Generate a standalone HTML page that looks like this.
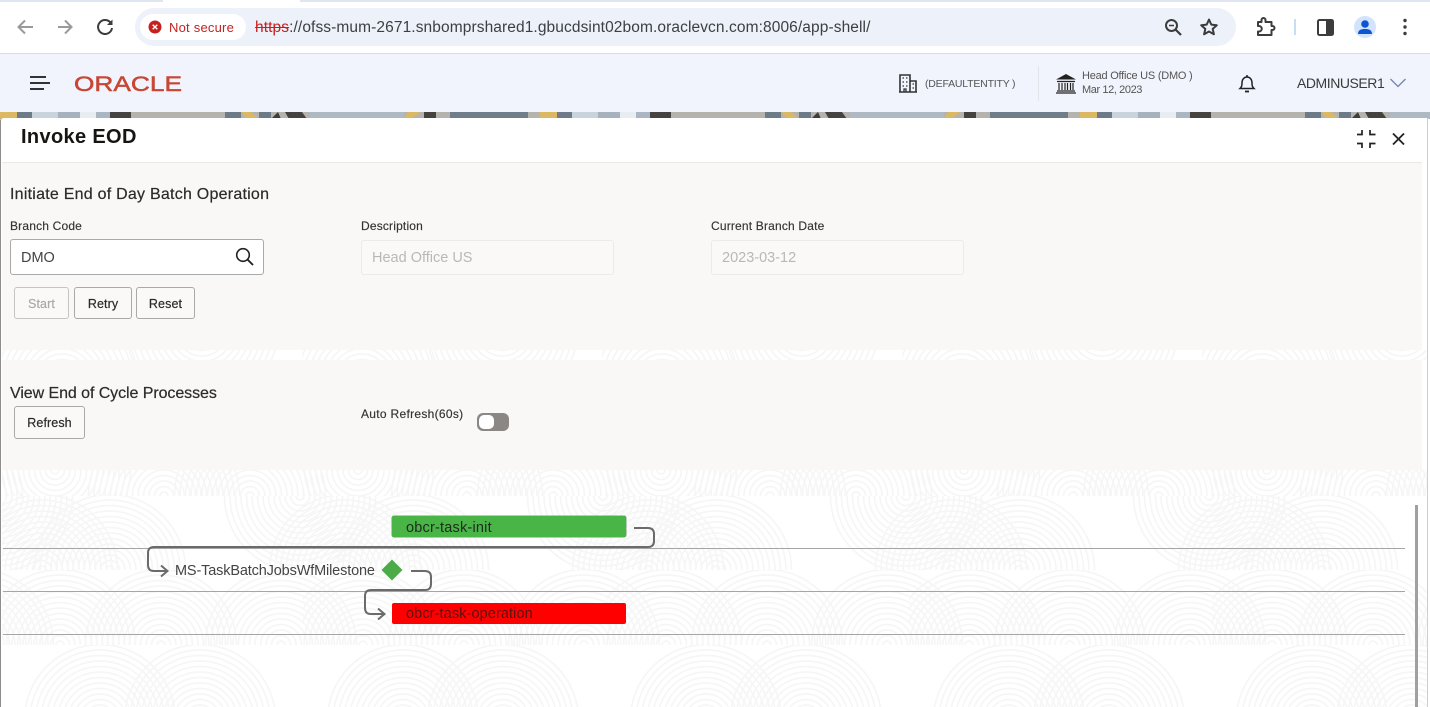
<!DOCTYPE html>
<html lang="en">
<head>
<meta charset="utf-8">
<title>Invoke EOD</title>
<style>
html,body{margin:0;padding:0;width:1430px;height:707px;overflow:hidden;background:#fff;font-family:"Liberation Sans",sans-serif}
#p{position:relative;width:1430px;height:707px;overflow:hidden;background:#fff;filter:blur(.35px)}
.a{position:absolute}
.t{position:absolute;white-space:nowrap;line-height:20px;height:20px}
svg{position:absolute;overflow:visible}
.btn{position:absolute;box-sizing:border-box;border:1.5px solid #a9a9a9;border-radius:3px;background:#faf9f7;text-align:center;font-size:12.5px;color:#2b2b2b;letter-spacing:.1px;-webkit-text-stroke:.2px currentColor}
.lab{font-size:12px;color:#333;letter-spacing:.18px;-webkit-text-stroke:.15px currentColor}
.h2{font-size:16px;color:#2b2b2b;-webkit-text-stroke:.2px currentColor}
.inp{position:absolute;box-sizing:border-box;height:35px;width:253px;top:240px;border-radius:3px;background:#faf9f7;border:1px solid #ecebe8}
</style>
</head>
<body>
<div id="p">
<!-- chrome -->
<div class="a" style="left:0;top:0;width:1430px;height:2px;background:#dfe5f1"></div>
<div class="a" style="left:163px;top:0;width:137px;height:2px;background:#fff"></div>
<div class="a" style="left:0;top:53px;width:1430px;height:1px;background:#dcdcdc"></div>
<svg style="left:0;top:0" width="130" height="54" fill="none">
<path d="M33 27H19M25 20.500 18.500 27 25 33.500" stroke="#9a9a9a" stroke-width="2"/>
<path d="M58 27H72M65 20.500 71.500 27 65 33.500" stroke="#9a9a9a" stroke-width="2"/>
<path d="M110.800 23A7 7 0 1 0 112 28" stroke="#3c3c3c" stroke-width="2"/>
<path d="M112.500 19.500V25H107Z" fill="#3c3c3c"/>
</svg>
<div class="a" style="left:135px;top:8px;width:1101px;height:38px;border-radius:19px;background:#edf1f9"></div>
<div class="a" style="left:140px;top:14px;width:106px;height:26px;border-radius:13px;background:#fff"></div>
<svg style="left:148px;top:20px" width="14" height="14"><circle cx="7" cy="7" r="6.500" fill="#c5221f"/><path d="M4.700 4.700 9.300 9.300M9.300 4.700 4.700 9.300" stroke="#fff" stroke-width="1.400"/></svg>
<div class="t" style="left:169px;top:18px;font-size:13px;color:#c5221f;letter-spacing:.22px">Not secure</div>
<div class="t" style="left:255px;top:18px;font-size:15.500px;color:#3c4043;letter-spacing:.1px"><span style="color:#c5221f;text-decoration:line-through">https</span>://ofss-mum-2671.snbomprshared1.gbucdsint02bom.oraclevcn.com:8006/app-shell/</div>
<svg style="left:1160px;top:14px" width="260" height="28" fill="none">
<circle cx="11.500" cy="11.500" r="5.500" stroke="#3c3c3c" stroke-width="2"/><path d="M15.500 15.500 21 21" stroke="#3c3c3c" stroke-width="2.200"/><path d="M9 11.500h5" stroke="#3c3c3c" stroke-width="1.500"/>
<path d="M49 5.500l2.300 5.100 5.500.6-4.100 3.700 1.200 5.400-4.900-2.800-4.900 2.800 1.200-5.400-4.100-3.700 5.500-.6z" stroke="#3c3c3c" stroke-width="2" stroke-linejoin="round"/>
<path d="M98 8h3.500V6a2 2 0 0 1 4 0V8h6v4h1a2 2 0 0 1 0 4h-1v5H98v-3.500h1a2.700 2.700 0 0 0 0-5.500h-1z" stroke="#3c3c3c" stroke-width="2" stroke-linejoin="round"/>
<path d="M135 5V21" stroke="#c8dcf5" stroke-width="2"/>
<rect x="158" y="6" width="15" height="15" rx="1.500" stroke="#3c3c3c" stroke-width="2"/><rect x="166" y="6" width="7" height="15" fill="#3c3c3c"/>
<circle cx="205" cy="13" r="11" fill="#d3e3fd"/><circle cx="205" cy="10" r="3.800" fill="#0b57d0"/><path d="M198 20c0-4 3-5 7-5s7 1 7 5z" fill="#0b57d0"/>
<circle cx="245" cy="6.500" r="1.700" fill="#3c3c3c"/><circle cx="245" cy="13" r="1.700" fill="#3c3c3c"/><circle cx="245" cy="19.500" r="1.700" fill="#3c3c3c"/>
</svg>

<!-- app header -->
<div class="a" style="left:0;top:54px;width:1430px;height:58px;background:#f1f4fc"></div>
<svg style="left:0;top:54px" width="60" height="58"><path d="M30 23H46M30 29H50M30 35H44" stroke="#333" stroke-width="2"/></svg>
<svg style="left:70px;top:70px" width="120" height="28"><text x="4" y="21" font-family="Liberation Sans,sans-serif" font-size="21" fill="#c74634" stroke="#c74634" stroke-width=".5" textLength="108" lengthAdjust="spacingAndGlyphs">ORACLE</text></svg>
<svg style="left:899px;top:74px" width="20" height="20" fill="none" stroke="#333" stroke-width="1.600"><path d="M1 18V1h10v17M11 7h6v11M0 18h18"/><path d="M3.500 4h1.500M7 4h1.500M3.500 8h1.500M7 8h1.500M3.500 12h1.500M7 12h1.500M5 18v-3h2v3M13.500 10h1.500M13.500 14h1.500" stroke-width="1.300"/></svg>
<div class="t" style="left:925px;top:74px;font-size:10.500px;color:#555;letter-spacing:-.2px">(DEFAULTENTITY )</div>
<div class="a" style="left:1038px;top:66px;width:1px;height:35px;background:#e2e4ea"></div>
<svg style="left:1056px;top:74px" width="20" height="20" fill="none" stroke="#222"><path d="M10 0 20 5.500H0Z" fill="#222" stroke="none"/><path d="M1 7.500h18M1 17h18M0 19h20" stroke-width="1.300"/><path d="M3 9v7M6 9v7M9 9v7M11.500 9v7M14.500 9v7M17 9v7" stroke-width="1.200"/></svg>
<div class="t" style="left:1082px;top:66px;font-size:11px;color:#555;letter-spacing:-.23px">Head Office US (DMO )</div>
<div class="t" style="left:1082px;top:80px;font-size:11px;color:#555;letter-spacing:-.4px">Mar 12, 2023</div>
<svg style="left:1238px;top:74px" width="18" height="20" fill="none" stroke="#222" stroke-width="1.500"><path d="M2 14.500c1.500-1.500 2-2.500 2-5.500 0-3.500 2-6 5-6s5 2.500 5 6c0 3 .5 4 2 5.500z"/><path d="M7 17.500h4" stroke-width="1.800"/><path d="M9 1v2"/></svg>
<div class="t" style="left:1297px;top:73px;font-size:14px;color:#3a3a3a;letter-spacing:-.45px">ADMINUSER1</div>
<svg style="left:1390px;top:78px" width="16" height="10" fill="none"><path d="M.5 1 8 8.500 15.500 1" stroke="#6d86ae" stroke-width="1.300"/></svg>

<!-- decorative strip -->
<svg style="left:0;top:112px" width="1430" height="7">
<defs><pattern id="s" width="540" height="7" patternUnits="userSpaceOnUse">
<rect width="540" height="7" fill="#b4b3ae"/>
<rect x="0" width="17" height="7" fill="#dcb862"/><rect x="17" width="15" height="7" fill="#6d7b88"/><rect x="32" width="26" height="7" fill="#c9d3dc"/><rect x="58" width="22" height="7" fill="#a6b3bf"/><rect x="80" width="16" height="7" fill="#e8edf2"/><rect x="96" width="14" height="7" fill="#aab6c1"/><rect x="110" width="21" height="7" fill="#45423f"/>
<rect x="225" width="16" height="7" fill="#6d7b88"/><path d="M241 0h10l8 7h-12z" fill="#dcb862"/><rect x="259" width="12" height="7" fill="#6d7b88"/><path d="M271 7l7-7 3 7z" fill="#3f3d3b"/><path d="M285 0h17l5 7h-18z" fill="#45423f"/>
<rect x="310" width="94" height="7" fill="#aeb9c4"/><path d="M404 7l4-7h12l-9 7z" fill="#dcb862"/><rect x="424" width="12" height="7" fill="#45423f"/>
<rect x="450" width="78" height="7" fill="#6f7c89"/><rect x="528" width="12" height="7" fill="#b4b3ae"/>
</pattern></defs>
<rect width="1430" height="7" fill="url(#s)"/>
</svg>

<!-- modal -->
<div class="a" style="left:0;top:118px;width:1428px;height:589px;background:#fff;border-left:1.500px solid #8d8d8d;border-right:1px solid #cfcfcf;box-sizing:border-box;border-top-left-radius:3px"></div>
<div class="t" style="left:21px;top:127px;font-size:20px;font-weight:700;color:#161513;letter-spacing:.35px">Invoke EOD</div>
<svg style="left:1355px;top:128px" width="52" height="22" fill="none" stroke="#222" stroke-width="1.700"><path d="M2 6.500H7V2M15 2V6.500H20.500M2 15.500H7V20M15 20V15.500H20.500"/><path d="M38 5.500 49 16.500M49 5.500 38 16.500" stroke-width="1.800"/></svg>

<!-- pattern -->
<svg style="left:2px;top:0" width="1425" height="707">
<defs>
<g id="c" fill="none" stroke="#f6f6f6" stroke-width="1.700">
<circle r="4"/><circle r="9.500"/><circle r="15"/><circle r="20.500"/><circle r="26"/><circle r="31.500"/><circle r="37"/><circle r="42.500"/><circle r="48"/><circle r="53.500"/><circle r="59"/><circle r="64.500"/><circle r="70"/><circle r="75.500"/>
</g>
<pattern id="r1" x="-2" y="470" width="303" height="26" patternUnits="userSpaceOnUse">
<use href="#c" x="164" y="26"/><use href="#c" x="55" y="0"/><use href="#c" x="250" y="26"/><use href="#c" x="-53" y="26"/>
</pattern>
<pattern id="r2" x="-2" y="496" width="303" height="74" patternUnits="userSpaceOnUse">
<use href="#c" x="110" y="74"/><use href="#c" x="42" y="74"/><use href="#c" x="345" y="74"/><use href="#c" x="300" y="0"/><use href="#c" x="-3" y="0"/>
</pattern>
<pattern id="r3" x="-2" y="570" width="303" height="75" patternUnits="userSpaceOnUse">
<use href="#c" x="161" y="75"/><use href="#c" x="281" y="75"/><use href="#c" x="-22" y="75"/><use href="#c" x="60" y="75"/>
</pattern>
<pattern id="r4" x="-2" y="645" width="303" height="62" patternUnits="userSpaceOnUse">
<use href="#c" x="100" y="75"/><use href="#c" x="200" y="75"/>
</pattern>
<pattern id="r0" x="0" y="350" width="300" height="10" patternUnits="userSpaceOnUse">
<use href="#c" x="60" y="30"/><use href="#c" x="200" y="-20"/>
</pattern>
</defs>
<rect x="0" y="350" width="1425" height="10" fill="url(#r0)"/>
<rect x="0" y="470" width="1425" height="26" fill="url(#r1)"/>
<rect x="0" y="496" width="1425" height="74" fill="url(#r2)"/>
<rect x="0" y="570" width="1425" height="75" fill="url(#r3)"/>
<rect x="0" y="645" width="1425" height="62" fill="url(#r4)"/>
</svg>

<!-- sections -->
<div class="a" style="left:2px;top:162px;width:1420px;height:1px;background:#e9e8e5"></div>
<div class="a" style="left:2px;top:163px;width:1420px;height:187px;background:#f9f8f6"></div>
<div class="a" style="left:2px;top:360px;width:1420px;height:110px;background:#f9f8f6"></div>

<div class="t h2" style="left:10px;top:185px;letter-spacing:.24px">Initiate End of Day Batch Operation</div>
<div class="t lab" style="left:10px;top:216px">Branch Code</div>
<div class="t lab" style="left:361px;top:216px">Description</div>
<div class="t lab" style="left:711px;top:216px">Current Branch Date</div>
<div class="inp" style="left:10px;top:239px;height:36px;width:254px;background:#fff;border:1.500px solid #a9a9a9"></div>
<div class="t" style="left:21px;top:248px;font-size:14.500px;color:#444">DMO</div>
<svg style="left:235px;top:247px" width="20" height="20" fill="none" stroke="#222" stroke-width="1.600"><circle cx="8" cy="8" r="6.300"/><path d="M12.500 12.500 18 18" stroke-width="1.900"/></svg>
<div class="inp" style="left:361px"></div>
<div class="t" style="left:372px;top:248px;font-size:14.500px;color:#b9b8b6">Head Office US</div>
<div class="inp" style="left:711px"></div>
<div class="t" style="left:722px;top:248px;font-size:14.500px;color:#b9b8b6">2023-03-12</div>
<div class="btn" style="left:14px;top:287px;width:55px;height:32px;line-height:32px;color:#a9a9a9;border-color:#c4c4c4">Start</div>
<div class="btn" style="left:74px;top:287px;width:58px;height:32px;line-height:32px">Retry</div>
<div class="btn" style="left:136px;top:287px;width:59px;height:32px;line-height:32px">Reset</div>
<div class="t h2" style="left:10px;top:384px;letter-spacing:-.07px">View End of Cycle Processes</div>
<div class="btn" style="left:14px;top:406px;width:71px;height:33px;line-height:33px">Refresh</div>
<div class="t lab" style="left:361px;top:404px;letter-spacing:.3px">Auto Refresh(60s)</div>
<div class="a" style="left:477px;top:413px;width:32px;height:18px;border-radius:6px;background:#8a8785"></div>
<div class="a" style="left:479px;top:415px;width:15px;height:14px;border-radius:5px;background:#fff"></div>

<!-- diagram -->
<div class="a" style="left:3px;top:548px;width:1402px;height:1px;background:#a5a5a5"></div>
<div class="a" style="left:3px;top:591px;width:1402px;height:1px;background:#a5a5a5"></div>
<div class="a" style="left:3px;top:634px;width:1402px;height:1px;background:#a5a5a5"></div>
<div class="a" style="left:1415px;top:505px;width:3px;height:202px;background:#a0a0a0"></div>
<div class="a" style="left:392px;top:516px;width:234px;height:21px;border-radius:2px;background:#4ab547;box-shadow:0 0 0 .5px #7a9a78"></div>
<div class="t" style="left:406px;top:518px;font-size:14.500px;color:#1f2a1f;letter-spacing:.2px">obcr-task-init</div>
<div class="a" style="left:392px;top:603px;width:234px;height:21px;border-radius:2px;background:#f00"></div>
<div class="t" style="left:406px;top:604px;font-size:14.500px;color:#5a1010;letter-spacing:.1px">obcr-task-operation</div>
<div class="t" style="left:175px;top:561px;font-size:14.500px;color:#444;letter-spacing:-.15px">MS-TaskBatchJobsWfMilestone</div>
<svg style="left:0;top:0" width="700" height="707" fill="none" stroke="#6b6b6b" stroke-width="2">
<path d="M634 528H648Q654 528 654 534V541Q654 547 648 547H154Q148 547 148 553V565Q148 571 154 571H167M161 565.500 167.500 571 161 576.500"/>
<path d="M411 571H425Q431 571 431 577V584Q431 590 425 590H371Q365 590 365 596V608Q365 614 371 614H384M378 608.500 384.500 614 378 619.500"/>
<path d="M392 559.500 402.500 570 392 580.500 381.500 570Z" fill="#4aab47" stroke="none"/>
</svg>
</div>
</body>
</html>
